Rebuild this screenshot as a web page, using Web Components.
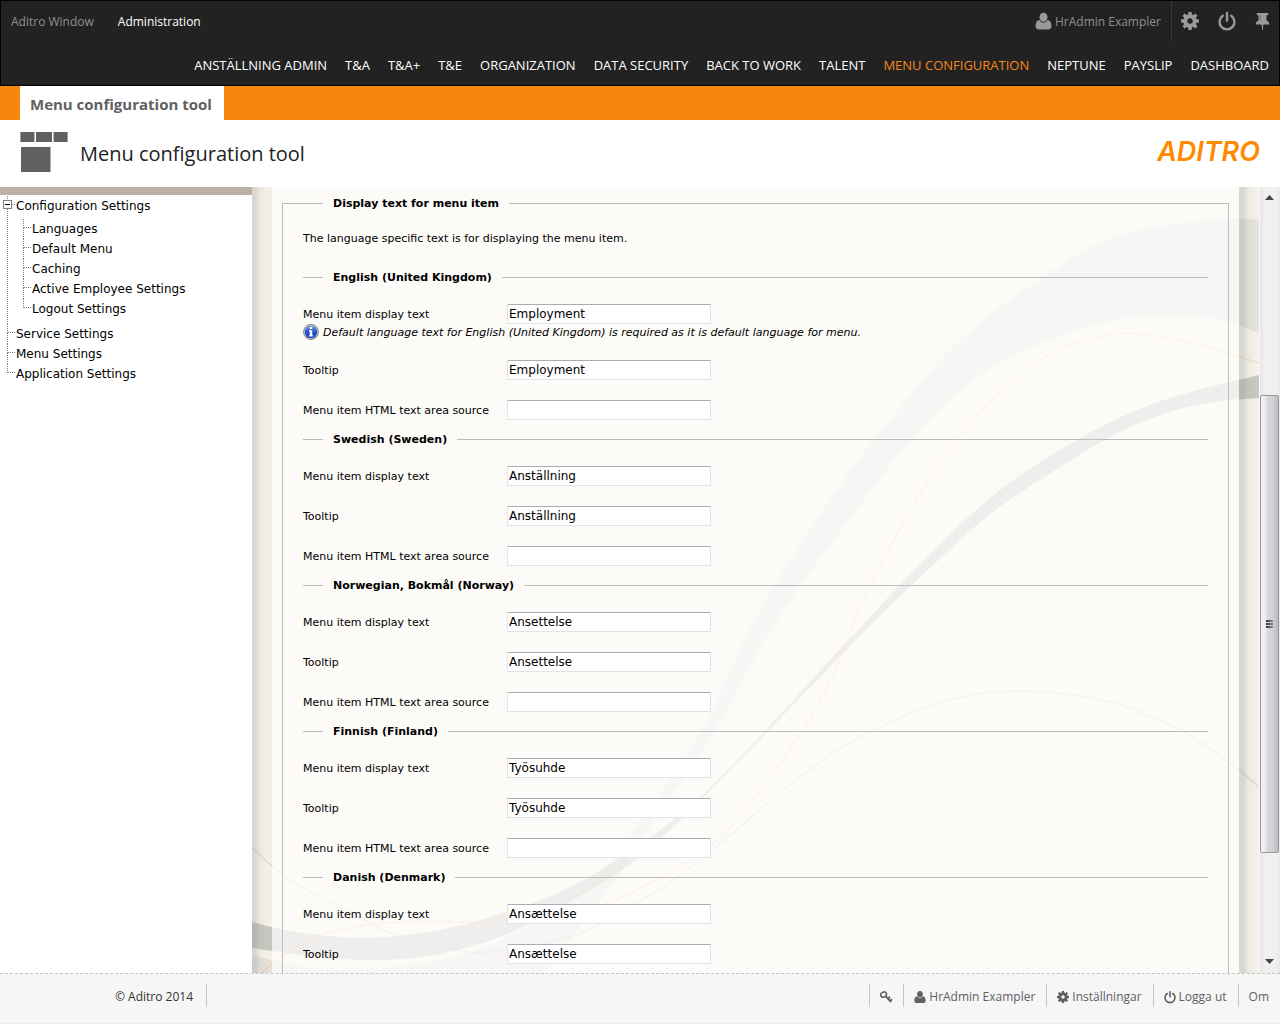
<!DOCTYPE html>
<html lang="sv">
<head>
<meta charset="utf-8">
<title>Menu configuration tool</title>
<style>
  html, body { margin: 0; height: 100%; background: #fff; }
  body { font-family: "Open Sans", "Noto Sans", sans-serif; }
</style>
</head>
<body>
<menu-tool-app></menu-tool-app>

<script>
const define = (name, html, setup) => {
  const template = document.createElement('template');
  template.innerHTML = html;
  customElements.define(name, class extends HTMLElement {
    constructor() {
      super();
      this.attachShadow({ mode: 'open' }).append(template.content.cloneNode(true));
    }
    connectedCallback() {
      if (setup && !this.ready) { this.ready = true; setup(this, this.shadowRoot); }
    }
  });
};

/* Smooth curve through a list of x,y points */
const curve = (pts, start = 'M') => {
  let d = `${start}${pts[0]}`;
  for (let i = 0; i < pts.length - 1; i++) {
    const a = pts[i - 1] || pts[i], b = pts[i], c = pts[i + 1], e = pts[i + 2] || c;
    d += `C${b[0] + (c[0] - a[0]) / 6},${b[1] + (c[1] - a[1]) / 6} ${c[0] - (e[0] - b[0]) / 6},${c[1] - (e[1] - b[1]) / 6} ${c[0]},${c[1]}`;
  }
  return d;
};

const teeth = [0, 45, 90, 135, 180, 225, 270, 315]
  .map(a => `<path d="M7.7 3.500 8.200 0h3.600l.5 3.500z" transform="rotate(${a} 10 10)"/>`).join('');
const ICONS = {
  user: '<ellipse cx="10" cy="5.6" rx="4.7" ry="5.4"/><path d="M5.2 8.8C2 9.2 .6 12 .6 16.2.6 18.400 2.200 20 4.400 20h11.200c2.200 0 3.800-1.600 3.800-3.800 0-4.200-1.400-7-4.600-7.400C13.600 10.600 12 11.900 10 11.900S6.400 10.600 5.200 8.800z"/>',
  cog: teeth + '<circle cx="10" cy="10" r="5.200" fill="none" stroke="currentColor" stroke-width="4.400"/>',
  power: '<g fill="none" stroke="currentColor" stroke-width="2.700" stroke-linecap="round"><path d="M5.300 4.200a8.300 8.300 0 1 0 9.400 0"/><path d="M10 1.200v8.300"/></g>',
  pin: '<path d="M4.500 0h11c1 0 1.400.7 1.400 1.300s-.4 1.300-1.400 1.300h-.8v6.300c2.300.9 3.300 2.500 3.300 4.500h-7L10.300 20h-.7L9 13.400H2c0-2 1-3.600 3.300-4.500V2.600h-.8c-1 0-1.400-.7-1.400-1.300S3.500 0 4.500 0z"/><path d="M7.300 3.200v5" stroke="#222" stroke-opacity=".5"/>',
  key: '<g fill="none" stroke="currentColor"><ellipse cx="6" cy="6" rx="5" ry="4.100" transform="rotate(-25 6 6)" stroke-width="2.600"/><path d="M9.600 8.800 18.600 18.600" stroke-width="3"/><path d="M13.200 13l3.400-3.400M16.600 16.800l3.400-3.400" stroke-width="3"/></g>'
};
define('ui-icon', `
  <style>
    :host { display: inline-block; width: 18px; height: 18px; flex: none; }
    svg { display: block; width: 100%; height: 100%; fill: currentColor; overflow: visible; }
  </style>
  <svg viewBox="0 0 20 20" aria-hidden="true"></svg>`,
  (el, root) => { root.querySelector('svg').innerHTML = ICONS[el.getAttribute('name')]; });

define('top-header', `
  <style>
    :host { display: block; background: #222; border: 1px solid #000; font-size: 12px; line-height: 20px; flex: none; }
    a, button { color: inherit; text-decoration: none; }
    .bar { display: flex; justify-content: space-between; height: 40px; color: #8f8f8f; }
    .left, .tools { display: flex; align-items: center; }
    .left { gap: 24px; padding-left: 10px; }
    .left a, .user span { padding-top: 2px; }
    .left .on { color: #fff; }
    .user { display: flex; align-items: center; gap: 3px; height: 40px; padding: 0 10px; border-right: 1px solid #383838; }
    .user ui-icon { width: 17px; color: #999; }
    button { border: 0; background: none; padding: 0 10px 0 9px; height: 40px; display: flex; align-items: center; color: #999; }
    button:last-child { padding: 0 8px; }
    button:last-child ui-icon { width: 17px; height: 19px; }
    nav.main { display: flex; flex-wrap: wrap; justify-content: flex-end; gap: 18px; padding: 14px 10px 10px; color: #fff; font-size: 13px; }
    nav.main .on { color: #f7871f; }
  </style>
  <div class="bar">
    <nav class="left"><a href="#">Aditro Window</a><a href="#" class="on">Administration</a></nav>
    <div class="tools">
      <a class="user" href="#"><ui-icon name="user"></ui-icon><span>HrAdmin Exampler</span></a>
      <button aria-label="Settings"><ui-icon name="cog"></ui-icon></button>
      <button aria-label="Log out"><ui-icon name="power"></ui-icon></button>
      <button aria-label="Pin"><ui-icon name="pin"></ui-icon></button>
    </div>
  </div>
  <nav class="main">
    <a href="#">ANSTÄLLNING ADMIN</a><a href="#">T&amp;A</a><a href="#">T&amp;A+</a><a href="#">T&amp;E</a>
    <a href="#">ORGANIZATION</a><a href="#">DATA SECURITY</a><a href="#">BACK TO WORK</a><a href="#">TALENT</a>
    <a href="#" class="on">MENU CONFIGURATION</a><a href="#">NEPTUNE</a><a href="#">PAYSLIP</a><a href="#">DASHBOARD</a>
  </nav>`);

define('page-title', `
  <style>
    :host { display: block; flex: none; }
    .tabs { display: flex; background: #f6860c; padding: 0 20px; }
    .tabs a { background: #fff; color: #5f6062; font-weight: 700; font-size: 15px; line-height: 34px; padding: 1px 12px 0 10px; height: 33px; text-decoration: none; }
    .title { display: flex; align-items: center; height: 67px; padding: 0 20px; gap: 12px; color: #222; }
    .title svg { width: 48px; height: 40px; fill: #5f6062; margin-bottom: 3px; }
    h1 { margin: 0; font-weight: 400; font-size: 20px; line-height: 28px; flex: 1; }
    .logo { font: italic 600 27px/32px Inter, "Open Sans", sans-serif; color: #ff8a00; margin-bottom: 3px; }
  </style>
  <nav class="tabs"><a href="#">Menu configuration tool</a></nav>
  <div class="title">
    <svg viewBox="0 0 48 40" aria-hidden="true"><path d="M.4 0h14v10H.4zM16 0h16v10H16zM33.600 0h14v10h-14zM1 15h29.500v25H1z"/></svg>
    <h1>Menu configuration tool</h1>
    <span class="logo">ADITRO</span>
  </div>`);

define('tree-item', `
  <style>
    :host { display: flex; position: relative; padding-left: 7px; }
    .elbow { display: flex; flex-direction: column; width: 8px; flex: none; }
    .elbow i { border-left: 1px dotted #808080; }
    .elbow .turn { height: 8px; border-bottom: 1px dotted #808080; }
    .elbow .rest { flex: 1; }
    :host([last]) .rest { display: none; }
    a { display: block; color: #000; text-decoration: none; line-height: 20px; padding-left: 1px; white-space: nowrap; }
    .kids { padding: 3px 0 5px 1px; }
    .kids[hidden], button[hidden] { display: none; }
    button { position: absolute; left: 3px; top: 4px; width: 9px; height: 9px; padding: 0; border: 1px solid #808080; background: linear-gradient(#000, #000) center / 5px 1px no-repeat #fff; }
  </style>
  <span class="elbow"><i class="turn"></i><i class="rest"></i></span>
  <div><a href="#"></a><div class="kids" hidden><slot></slot></div></div>
  <button aria-label="Collapse" hidden></button>`,
  (el, root) => {
    root.querySelector('a').textContent = el.getAttribute('label');
    if (el.hasAttribute('open')) {
      root.querySelector('.kids').hidden = false;
      root.querySelector('button').hidden = false;
    }
  });

define('side-tree', `
  <style>
    :host { display: block; width: 252px; flex: none; border-top: 8px solid #bdb1a6; box-sizing: border-box; padding-top: 1px; background: #fff; font: 12px "DejaVu Sans", sans-serif; }
  </style>
  <nav>
    <tree-item label="Configuration Settings" open>
      <tree-item label="Languages"></tree-item>
      <tree-item label="Default Menu"></tree-item>
      <tree-item label="Caching"></tree-item>
      <tree-item label="Active Employee Settings"></tree-item>
      <tree-item label="Logout Settings" last></tree-item>
    </tree-item>
    <tree-item label="Service Settings"></tree-item>
    <tree-item label="Menu Settings"></tree-item>
    <tree-item label="Application Settings" last></tree-item>
  </nav>`);

define('curve-backdrop', `
  <style>
    :host { position: absolute; inset: 0; }
    svg { display: block; width: 100%; height: 100%; }
  </style>
  <svg viewBox="252 187 1007 786" preserveAspectRatio="none" aria-hidden="true">
    <path class="soft" fill="#84867c" fill-opacity=".14"/>
    <path class="strong" fill="#7b7f78" fill-opacity=".36"/>
    <path class="amber" fill="none" stroke="#f5a661" stroke-opacity=".3" stroke-width="1.500"/>
    <path class="thin" fill="none" stroke="#7c7f7c" stroke-opacity=".2" stroke-width="1.500"/>
  </svg>`,
  (el, root) => {
    const set = (c, d) => root.querySelector('.' + c).setAttribute('d', d);
    set('soft',
      curve([[1259,220],[1220,219],[1150,228],[1100,243],[1043,277],[985,319],[940,360],[900,408],[860,458],[810,530],[755,620],[702,730],[643,817],[590,884],[500,940],[430,962],[350,970],[300,966],[252,955]]) +
      'L252,973L545,973' +
      curve([[545,973],[613,883],[657,817],[715,730],[777,620],[860,505],[920,430],[980,375],[1050,340],[1120,319],[1170,315],[1220,320],[1259,333]], 'L') + 'Z');
    set('strong',
      curve([[252,922],[290,931],[340,937],[385,937],[440,930],[500,914],[560,892],[620,858],[677,817],[724,774],[768,728],[830,660],[860,628],[900,585],[965,520],[1015,479],[1075,441],[1130,413],[1180,395],[1259,375]]) +
      curve([[1259,398],[1215,402],[1160,415],[1105,440],[1040,480],[983,520],[912,585],[860,636],[770,729],[725,775],[684,817],[635,860],[600,884],[560,907],[500,937],[440,954],[380,960],[320,957],[280,952],[252,948]], 'L') + 'Z');
    set('amber', curve([[1259,363],[1200,345],[1140,334],[1100,337],[1040,360],[960,435],[905,520],[860,607],[840,660],[802,732],[745,810],[700,855],[650,883],[600,905],[505,921],[400,922],[340,930],[295,946],[262,973]]));
    set('thin', curve([[1259,787],[1230,763],[1180,730],[1110,702],[1025,691],[950,700],[860,737],[790,785],[710,852],[650,895],[575,935],[490,952],[455,950]]) +
      curve([[252,848],[290,880],[340,908],[398,937]]));
  });

define('form-row', `
  <style>
    :host { display: block; margin-bottom: 20px; }
    .row { display: flex; align-items: center; }
    label { width: 204px; flex: none; line-height: 18px; padding-top: 2px; }
    input { box-sizing: border-box; width: 204px; height: 20px; margin: 0; padding: 0 1px; font: 12px "DejaVu Sans", sans-serif; color: #000; background: #fff; border: 1px solid #e2e3ea; border-top-color: #abadb3; border-radius: 1px; }
  </style>
  <div class="row"><label for="field"></label><input id="field" type="text"></div>
  <slot></slot>`,
  (el, root) => {
    root.querySelector('label').textContent = el.getAttribute('label');
    root.querySelector('input').value = el.getAttribute('value') || '';
  });

define('info-note', `
  <style>
    :host { display: flex; align-items: center; gap: 4px; height: 16px; font-style: italic; }
    svg { width: 16px; height: 16px; flex: none; }
    span { padding-top: 2px; }
  </style>
  <svg viewBox="0 0 16 16" aria-hidden="true">
    <defs><linearGradient id="g" x2="0" y2="1"><stop stop-color="#6f9bea"/><stop offset=".5" stop-color="#2a55cc"/><stop offset="1" stop-color="#1c3fc0"/></linearGradient></defs>
    <circle cx="8" cy="8" r="7.900" fill="#808080"/><circle cx="8" cy="8" r="7" fill="#cfcfcf"/>
    <circle cx="8" cy="8" r="6.300" fill="url(#g)"/>
    <path fill="#fff" d="M6.800 3h2.400v2H6.800zM6 6.300h3.200v5H10v1.200H6v-1.200h.8V7.500H6z"/>
  </svg>
  <span><slot></slot></span>`);

const SECTION_CSS = `
  :host { display: block; }
  fieldset { margin: 0; min-width: 0; border: 0 solid #bcbcbc; padding: 0; }
  legend { margin-left: 20px; padding: 0 10px; font-weight: 700; line-height: 16px; height: 14px; }`;

define('language-section', `
  <style>${SECTION_CSS}
    fieldset { border-top-width: 1px; padding: 20px 0 12px; }
    form-row:last-of-type { margin-bottom: 0; }
  </style>
  <fieldset>
    <legend></legend>
    <form-row class="text" label="Menu item display text"><slot></slot></form-row>
    <form-row class="tip" label="Tooltip"></form-row>
    <form-row class="html" label="Menu item HTML text area source"></form-row>
  </fieldset>`,
  (el, root) => {
    root.querySelector('legend').textContent = el.getAttribute('language');
    if (el.hasAttribute('plain')) root.querySelector('.html').remove();
    for (const c of ['.text', '.tip']) root.querySelector(c).shadowRoot.querySelector('input').value = el.getAttribute('value');
  });

define('display-text-form', `
  <style>${SECTION_CSS}
    :host { font: 11px/14px "DejaVu Sans", sans-serif; color: #000; padding: 9px 10px; }
    .outer { border-width: 1px; padding: 22px 20px 40px; }
    p { margin: 0 0 24px; }
  </style>
  <fieldset class="outer">
    <legend>Display text for menu item</legend>
    <p>The language specific text is for displaying the menu item.</p>
    <language-section language="English (United Kingdom)" value="Employment">
      <info-note>Default language text for English (United Kingdom) is required as it is default language for menu.</info-note>
    </language-section>
    <language-section language="Swedish (Sweden)" value="Anställning"></language-section>
    <language-section language="Norwegian, Bokmål (Norway)" value="Ansettelse"></language-section>
    <language-section language="Finnish (Finland)" value="Työsuhde"></language-section>
    <language-section language="Danish (Denmark)" value="Ansættelse" plain></language-section>
  </fieldset>`);

define('scroll-rail', `
  <style>
    :host { display: flex; flex-direction: column; width: 21px; flex: none; box-sizing: border-box; border-left: 1px solid #fafafa; background: linear-gradient(90deg, #e3e3e3, #efefef 20%, #f0f0f0 80%, #e8e8e8); }
    button { height: 17px; border: 0; padding: 3px 2px 0 0; box-sizing: border-box; background: none; display: grid; place-items: center; }
    button:last-child { padding: 0 2px 5px 0; }
    svg { width: 9px; height: 5px; display: block; }
    .before { flex: 192; } .after { flex: 103; }
    .thumb { flex: 457; box-sizing: border-box; margin-right: 1px; border: 1px solid #989898; border-radius: 2px; background: linear-gradient(90deg, #f4f4f4, #e9e9eb 30%, #d6d7da 36%, #d3d4d8 65%, #babbc0); display: flex; flex-direction: column; align-items: center; justify-content: center; gap: 1px; }
    .thumb i { width: 7px; height: 2px; background: linear-gradient(90deg, #333, #888); }
  </style>
  <button aria-label="Scroll up"><svg viewBox="0 0 9 5"><path d="M0 5 4.500 0 9 5z" fill="#444"/></svg></button>
  <div class="before"></div>
  <div class="thumb"><i></i><i></i><i></i></div>
  <div class="after"></div>
  <button aria-label="Scroll down"><svg viewBox="0 0 9 5"><path d="M0 0 4.500 5 9 0z" fill="#444"/></svg></button>`);

define('page-footer', `
  <style>
    :host { display: flex; justify-content: space-between; flex: none; box-sizing: border-box; height: 51px; padding: 10px 0; background: #f6f6f6; border-top: 1px dashed #c6c6c6; border-bottom: 1px solid #ededed; font-size: 12px; line-height: 26px; color: #5f6062; }
    .copy { color: #333; padding: 0 13px 0 115px; border-right: 1px solid #c4c4c4; height: 23px; }
    nav { display: flex; }
    a { display: flex; align-items: center; gap: 3px; box-sizing: border-box; height: 23px; padding: 2px 11px 0 10px; border-left: 1px solid #c4c4c4; color: inherit; text-decoration: none; }
    ui-icon { width: 12px; height: 12px; }
  </style>
  <div class="copy">© Aditro 2014</div>
  <nav>
    <a href="#" aria-label="Password"><ui-icon name="key"></ui-icon></a>
    <a href="#"><ui-icon name="user"></ui-icon><span>HrAdmin Exampler</span></a>
    <a href="#"><ui-icon name="cog"></ui-icon><span>Inställningar</span></a>
    <a href="#"><ui-icon name="power"></ui-icon><span>Logga ut</span></a>
    <a href="#"><span>Om</span></a>
  </nav>`);

define('menu-tool-app', `
  <style>
    :host { display: flex; flex-direction: column; height: 100vh; }
    .body { flex: 1; min-height: 0; display: flex; }
    main { position: relative; flex: 1; min-width: 0; overflow: hidden; padding: 0 20px;
      background: linear-gradient(90deg, #d5d5d3, #d9d9d6 4px, #ebe8e2 8px, #f3efe7 14px, transparent 20px) left / 20px 100% no-repeat,
        linear-gradient(90deg, #d5d5d2, #d9d9d4 5px, #ebe9e0 9px, #f3f0e7 16px, #f5f1e9 20px) right / 20px 100% no-repeat, #f4f0e8; }
    .panel { position: relative; height: 100%; overflow: hidden; background: rgba(255, 255, 255, .7); }
  </style>
  <top-header></top-header>
  <page-title></page-title>
  <div class="body">
    <side-tree></side-tree>
    <main>
      <curve-backdrop></curve-backdrop>
      <div class="panel"><display-text-form></display-text-form></div>
    </main>
    <scroll-rail></scroll-rail>
  </div>
  <page-footer></page-footer>`);
</script>
</body>
</html>
